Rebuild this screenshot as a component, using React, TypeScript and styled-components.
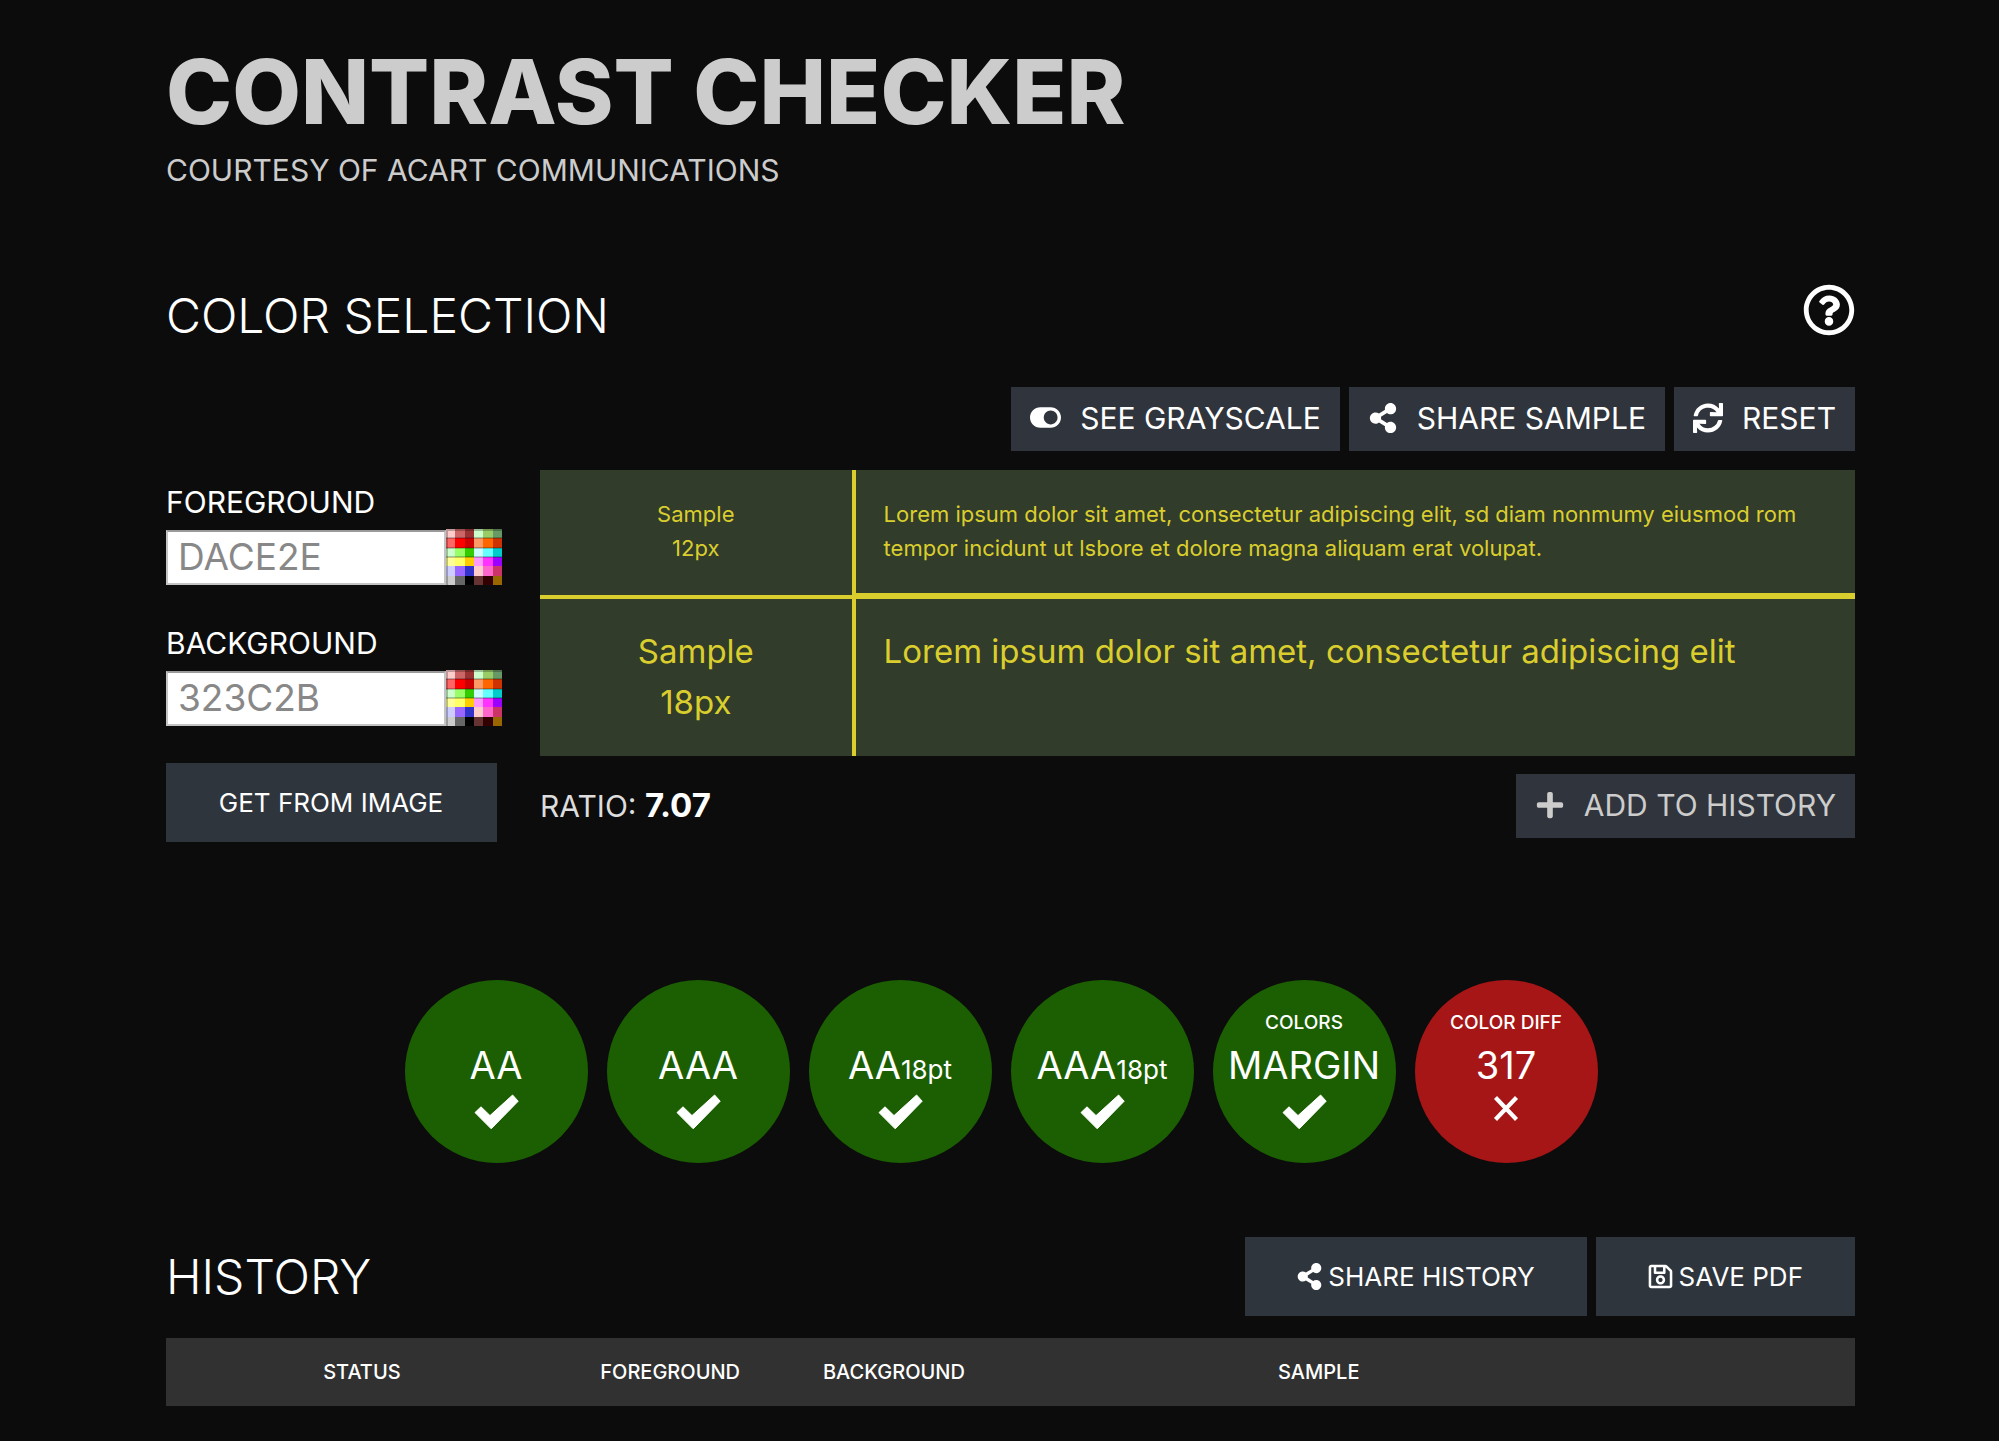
import React, { useState } from 'react';
import styled, { createGlobalStyle } from 'styled-components';
import {
  FaPlus,
  FaRegQuestionCircle,
  FaRegSave,
  FaShareAlt,
  FaSync,
  FaToggleOn,
} from 'react-icons/fa';

const GlobalStyle = createGlobalStyle`
  *, *::before, *::after { box-sizing: border-box; }
  body {
    margin: 0;
    background: #0c0c0c;
    color: #fff;
    font-family: Inter, "Liberation Sans", sans-serif;
    font-size: 30px;
  }
  button, input { font-family: inherit; }
  h1, h2, p { margin: 0; font-weight: 400; }
`;

const Page = styled.div`
  padding: 44px 144px 34px 166px;
`;

const Title = styled.h1`
  color: #ccc;
  font-size: 89px;
  line-height: 96px;
  && { font-weight: 800; }
`;

const Tagline = styled.p`
  margin-top: 10px;
  color: #ccc;
  line-height: 40px;
`;

const SectionHead = styled.div<{ $align: string; $top: number }>`
  display: flex;
  justify-content: space-between;
  align-items: ${(p) => p.$align};
  margin-top: ${(p) => p.$top}px;
`;

const SectionTitle = styled.h2`
  font-size: 48px;
  line-height: 64px;
  && { font-weight: 300; }
`;

const HelpButton = styled.button`
  display: flex;
  padding: 0;
  border: 0;
  background: none;
  color: #fff;
  font-size: 52px;
  cursor: pointer;
`;

const Toolbar = styled.div`
  display: flex;
  justify-content: flex-end;
  gap: 9px;
  margin-top: 39px;
`;

const ToolButton = styled.button<{ $muted?: boolean }>`
  display: flex;
  align-items: center;
  gap: 19px;
  height: 64px;
  padding: 0 19px 3px;
  border: 0;
  background: #30343c;
  color: ${(p) => (p.$muted ? '#ccc' : '#fff')};
  font-size: 30px;
  cursor: pointer;
  svg { flex: none; width: auto; height: 30px; }
`;

const ToggleIcon = styled(FaToggleOn)`
  && { height: 31px; }
`;

const Workspace = styled.div`
  display: grid;
  grid-template-columns: 336px 1fr;
  column-gap: 38px;
  margin-top: 19px;
`;

const Sidebar = styled.form`
  display: flex;
  flex-direction: column;
  align-items: flex-start;
  padding-top: 14px;
`;

const Field = styled.div`
  margin-bottom: 40px;
  &:last-of-type { margin-bottom: 37px; }
`;

const FieldLabel = styled.label`
  display: block;
  line-height: 36px;
`;

const FieldRow = styled.div`
  display: flex;
  align-items: flex-end;
  margin-top: 9px;
`;

const ColorInput = styled.input`
  width: 280px;
  height: 55px;
  padding: 0 10px 2px;
  border: 2px solid #c4c4c4;
  border-top-color: #9a9a9a;
  background: #fff;
  color: #888;
  font-size: 37px;
`;

const PaletteButton = styled.button`
  display: flex;
  padding: 0;
  border: 0;
  background: none;
  cursor: pointer;
`;

const BigButton = styled.button<{ $minWidth?: number }>`
  display: flex;
  align-items: center;
  justify-content: center;
  gap: 5px;
  min-width: ${(p) => p.$minWidth ?? 0}px;
  height: 79px;
  padding: 0 52px 0 51px;
  border: 0;
  background: #2e353d;
  color: #fff;
  font-size: 26px;
  cursor: pointer;
  svg { width: auto; height: 27px; }
`;

const Samples = styled.div`
  display: grid;
  grid-template-columns: 24% 1fr;
  background: #323c2b;
  color: #dace2e;
`;

const SampleCell = styled.div<{ $large?: boolean; $name?: boolean }>`
  padding: 27px 28px 28px;
  font-size: ${(p) => (p.$large ? 33 : 22)}px;
  line-height: ${(p) => (p.$large ? 51 : 34)}px;
  text-align: ${(p) => (p.$name ? 'center' : 'left')};
  border: 0 solid #dace2e;
  border-right-width: ${(p) => (p.$name ? 4 : 0)}px;
  border-bottom-width: ${(p) => (p.$large ? 0 : p.$name ? 4 : 6)}px;
`;

const ResultRow = styled.div`
  display: flex;
  justify-content: space-between;
  align-items: center;
  margin-top: 18px;
`;

const Ratio = styled.p`
  padding-bottom: 2px;
  color: #ddd;
  strong { color: #fff; font-size: 33px; }
`;

const Scores = styled.div`
  display: flex;
  justify-content: center;
  gap: 19px;
  margin-top: 138px;
  padding-right: 19px;
`;

const Score = styled.div<{ $pass: boolean }>`
  display: flex;
  flex-direction: column;
  align-items: center;
  width: 183px;
  height: 183px;
  padding-top: 31px;
  border-radius: 50%;
  background: ${(p) => (p.$pass ? '#1b5f02' : '#a61616')};
  white-space: nowrap;
`;

const ScoreCaption = styled.span`
  height: 24px;
  font-size: 19px;
  font-weight: 500;
  line-height: 24px;
`;

const ScoreValue = styled.span`
  height: 40px;
  margin: 10px 0 9px;
  font-size: 38px;
  line-height: 40px;
  small { font-size: 26px; line-height: 1; }
`;

const HeadActions = styled.div`
  display: flex;
  gap: 9px;
`;

const HistoryTable = styled.table`
  width: 100%;
  margin-top: 22px;
  border-collapse: collapse;
  table-layout: fixed;
  background: #313131;
`;

const HeaderCell = styled.th<{ $share: number }>`
  width: ${(p) => p.$share}%;
  height: 68px;
  padding: 0;
  font-size: 20px;
  font-weight: 500;
  text-align: center;
`;

const swatches = [
  ['#ffcccc', '#cc6666', '#993333', '#ccffcc', '#99cc66', '#669966'],
  ['#ff6666', '#ff0000', '#cc0000', '#ff9966', '#ff6600', '#cc3300'],
  ['#ccffcc', '#99ff66', '#33cc00', '#ccffff', '#66ffff', '#00cccc'],
  ['#ffff99', '#ffff66', '#ffcc00', '#ff99ff', '#ff33ff', '#9900ff'],
  ['#ccccff', '#9966ff', '#3333cc', '#ffcccc', '#ff66cc', '#cc3366'],
  ['#cccccc', '#666666', '#000000', '#663333', '#330000', '#996600'],
];

function PaletteIcon() {
  return (
    <svg
      width="56"
      height="56"
      viewBox="0 0 60 60"
      shapeRendering="crispEdges"
      aria-hidden="true"
    >
      {swatches.map((row, y) =>
        row.map((fill, x) => (
          <rect key={`${x}-${y}`} x={x * 10} y={y * 10} width="10" height="10" fill={fill} />
        )),
      )}
      <path d="M0 10H60M0 20H60M0 30H60" stroke="#000" strokeOpacity="0.22" strokeWidth="2" />
      <path d="M1 0V60M0 1H60" stroke="#000" strokeOpacity="0.25" strokeWidth="2" fill="none" />
    </svg>
  );
}

function CheckMark() {
  return (
    <svg width="45" height="36" viewBox="0 0 45 36" role="img" aria-label="Pass">
      <path
        d="M1 18.6 7 12.8 16 21.6 38.6 1 44.2 7.2 17.2 34.8Z"
        fill="#fff"
        stroke="#fff"
        strokeLinejoin="round"
      />
    </svg>
  );
}

function CrossMark() {
  return (
    <svg width="26" height="28" viewBox="0 0 26 28" role="img" aria-label="Fail">
      <path d="M2.5 3.5 23.5 25.5M23.5 3.5 2.5 25.5" stroke="#fff" strokeWidth="4.2" />
    </svg>
  );
}

const scores = [
  { value: 'AA', pass: true },
  { value: 'AAA', pass: true },
  { value: 'AA', size: '18pt', pass: true },
  { value: 'AAA', size: '18pt', pass: true },
  { caption: 'COLORS', value: 'MARGIN', pass: true },
  { caption: 'COLOR DIFF', value: '317', pass: false },
];

const columns = [
  { name: 'STATUS', share: 23.2 },
  { name: 'FOREGROUND', share: 13.3 },
  { name: 'BACKGROUND', share: 13.2 },
  { name: 'SAMPLE', share: 37.1 },
  { name: '', share: 13.2 },
];

function ColorField({ id, label, initial }: { id: string; label: string; initial: string }) {
  const [value, setValue] = useState(initial);
  return (
    <Field>
      <FieldLabel htmlFor={id}>{label}</FieldLabel>
      <FieldRow>
        <ColorInput id={id} value={value} onChange={(e) => setValue(e.target.value)} />
        <PaletteButton type="button" aria-label={`${label} palette`}>
          <PaletteIcon />
        </PaletteButton>
      </FieldRow>
    </Field>
  );
}

export default function App() {
  return (
    <>
      <GlobalStyle />
      <Page>
        <header>
          <Title>CONTRAST CHECKER</Title>
          <Tagline>COURTESY OF ACART COMMUNICATIONS</Tagline>
        </header>

        <section>
          <SectionHead $align="flex-start" $top={94}>
            <SectionTitle>COLOR SELECTION</SectionTitle>
            <HelpButton type="button" aria-label="Help">
              <FaRegQuestionCircle />
            </HelpButton>
          </SectionHead>

          <Toolbar>
            <ToolButton type="button"><ToggleIcon />SEE GRAYSCALE</ToolButton>
            <ToolButton type="button"><FaShareAlt />SHARE SAMPLE</ToolButton>
            <ToolButton type="button"><FaSync />RESET</ToolButton>
          </Toolbar>

          <Workspace>
            <Sidebar onSubmit={(e) => e.preventDefault()}>
              <ColorField id="foreground" label="FOREGROUND" initial="DACE2E" />
              <ColorField id="background" label="BACKGROUND" initial="323C2B" />
              <BigButton type="button" $minWidth={331}>GET FROM IMAGE</BigButton>
            </Sidebar>

            <div>
              <Samples>
                <SampleCell $name>Sample<br />12px</SampleCell>
                <SampleCell>
                  Lorem ipsum dolor sit amet, consectetur adipiscing elit, sd diam nonmumy eiusmod
                  rom tempor incidunt ut lsbore et dolore magna aliquam erat volupat.
                </SampleCell>
                <SampleCell $large $name>Sample<br />18px</SampleCell>
                <SampleCell $large>
                  Lorem ipsum dolor sit amet, consectetur adipiscing elit
                </SampleCell>
              </Samples>
              <ResultRow>
                <Ratio>RATIO: <strong>7.07</strong></Ratio>
                <ToolButton type="button" $muted><FaPlus />ADD TO HISTORY</ToolButton>
              </ResultRow>
            </div>
          </Workspace>

          <Scores>
            {scores.map((s, i) => (
              <Score key={i} $pass={s.pass}>
                <ScoreCaption>{s.caption}</ScoreCaption>
                <ScoreValue>{s.value}{s.size && <small>{s.size}</small>}</ScoreValue>
                {s.pass ? <CheckMark /> : <CrossMark />}
              </Score>
            ))}
          </Scores>
        </section>

        <section>
          <SectionHead $align="center" $top={74}>
            <SectionTitle>HISTORY</SectionTitle>
            <HeadActions>
              <BigButton type="button"><FaShareAlt />SHARE HISTORY</BigButton>
              <BigButton type="button"><FaRegSave />SAVE PDF</BigButton>
            </HeadActions>
          </SectionHead>
          <HistoryTable>
            <thead>
              <tr>
                {columns.map((c) => (
                  <HeaderCell key={c.name} $share={c.share} scope="col">{c.name}</HeaderCell>
                ))}
              </tr>
            </thead>
          </HistoryTable>
        </section>
      </Page>
    </>
  );
}
